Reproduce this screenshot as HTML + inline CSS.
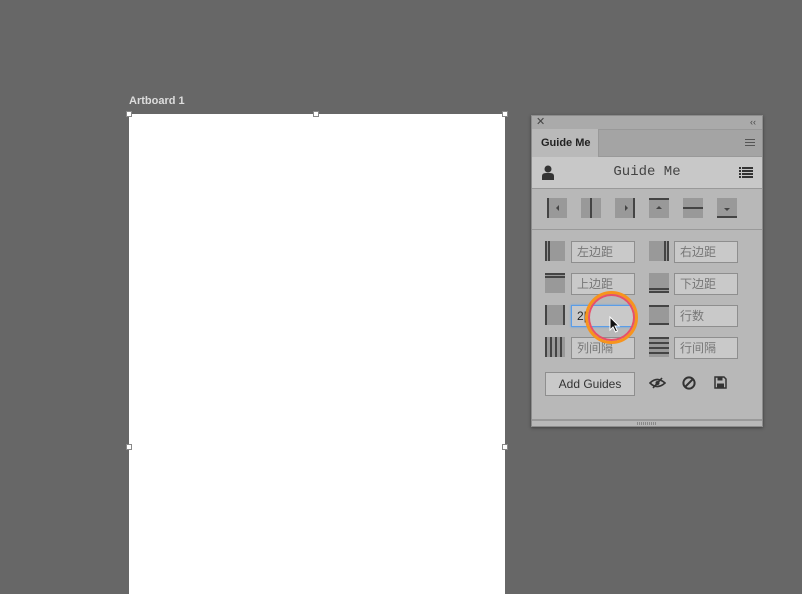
<!DOCTYPE html>
<html><head><meta charset="utf-8"><style>
*{margin:0;padding:0;box-sizing:border-box}
body{width:802px;height:594px;background:#676767;position:relative;overflow:hidden;font-family:"Liberation Sans","Noto Sans CJK SC",sans-serif}
.abs{position:absolute}
.h{position:absolute;width:6px;height:6px;border:1px solid #888;background:#fff}
.inp{position:absolute;width:64px;height:22px;border:1px solid #8e8e8e;background:#c9c9c9;font-size:12px;color:#777;padding:3px 5px;line-height:14px}
.ib{position:absolute;width:20px;height:20px;background:#999}
.ar{position:absolute;width:0;height:0;border:3px solid transparent}
</style></head><body>
<div class="abs" style="left:129px;top:95px;color:#ddd;font-size:11px;font-weight:bold">Artboard 1</div>
<div class="abs" style="left:129px;top:114px;width:376px;height:480px;background:#fff"></div>
<div class="h" style="left:126px;top:111px"></div><div class="h" style="left:313px;top:111px"></div><div class="h" style="left:502px;top:111px"></div>
<div class="h" style="left:126px;top:444px"></div><div class="h" style="left:502px;top:444px"></div>

<div class="abs" style="left:531px;top:115px;width:232px;height:312px;background:#b8b8b8;border:1px solid #8c8c8c;box-shadow:0 1px 3px rgba(0,0,0,.4)">
 <div class="abs" style="left:0;top:0;width:230px;height:13px;background:#aaa;font-size:11px;color:#444;line-height:12px"><span style="position:absolute;left:4px">✕</span><span style="position:absolute;right:6px;font-size:9px">‹‹</span></div>
 <div class="abs" style="left:0;top:13px;width:230px;height:28px;background:#a4a4a4;border-top:1px solid #999;border-bottom:1px solid #999"></div>
 <div class="abs" style="left:0;top:13px;width:67px;height:28px;background:#b9b9b9;border-right:1px solid #999;font-size:11px;font-weight:bold;color:#222;padding:8px 0 0 9px">Guide Me</div>
 <div class="abs" style="right:7px;top:23px;width:10px;height:7px;border-top:1px solid #555;border-bottom:1px solid #555"><div style="margin-top:2px;border-top:1px solid #555"></div></div>
 <div class="abs" style="left:0;top:41px;width:230px;height:32px;background:#c8c8c8;border-bottom:1px solid #999"></div>
 <div class="abs" style="left:0;top:48px;width:230px;text-align:center;font-family:'Liberation Mono',monospace;font-size:14px;color:#444">Guide Me</div>
 <svg class="abs" style="left:10px;top:49px" width="12" height="15"><circle cx="6" cy="4" r="3.5" fill="#333"/><path d="M0 15 V11 Q0 8 4 8 H8 Q12 8 12 11 V15Z" fill="#333"/></svg>
 <svg class="abs" style="left:207px;top:51px" width="14" height="11" fill="#333"><rect x="0" y="0" width="2" height="2"/><rect x="3" y="0" width="11" height="2"/><rect x="0" y="3" width="2" height="2"/><rect x="3" y="3" width="11" height="2"/><rect x="0" y="6" width="2" height="2"/><rect x="3" y="6" width="11" height="2"/><rect x="0" y="9" width="2" height="2"/><rect x="3" y="9" width="11" height="2"/></svg>
 <div class="ib" style="left:15px;top:82px;border-left:2px solid #444"><div class="ar" style="left:4px;top:7px;border-right-color:#444"></div></div>
 <div class="ib" style="left:49px;top:82px"><div style="position:absolute;left:9px;top:0;width:2px;height:20px;background:#444"></div></div>
 <div class="ib" style="left:83px;top:82px;border-right:2px solid #444"><div class="ar" style="left:10px;top:7px;border-left-color:#444"></div></div>
 <div class="ib" style="left:117px;top:82px;border-top:2px solid #444"><div class="ar" style="left:7px;top:3px;border-bottom-color:#444"></div></div>
 <div class="ib" style="left:151px;top:82px"><div style="position:absolute;top:9px;left:0;width:20px;height:2px;background:#444"></div></div>
 <div class="ib" style="left:185px;top:82px;border-bottom:2px solid #444"><div class="ar" style="left:7px;top:10px;border-top-color:#444"></div></div>
 <div class="abs" style="left:0;top:113px;width:230px;border-top:1px solid #999"></div>

 <div class="ib" style="left:13px;top:125px;border-left:5px double #444"></div><div class="inp" style="left:39px;top:125px">左边距</div>
 <div class="ib" style="left:117px;top:125px;border-right:5px double #444"></div><div class="inp" style="left:142px;top:125px">右边距</div>
 <div class="ib" style="left:13px;top:157px;border-top:5px double #444"></div><div class="inp" style="left:39px;top:157px">上边距</div>
 <div class="ib" style="left:117px;top:157px;border-bottom:5px double #444"></div><div class="inp" style="left:142px;top:157px">下边距</div>
 <div class="ib" style="left:13px;top:189px;border-left:2px solid #444;border-right:2px solid #444"></div><div class="inp" style="left:39px;top:189px;border:1px solid #5a9de8;box-shadow:0 0 2px #5a9de8;color:#222">2|</div>
 <div class="ib" style="left:117px;top:189px;border-top:2px solid #444;border-bottom:2px solid #444"></div><div class="inp" style="left:142px;top:189px">行数</div>
 <div class="ib" style="left:13px;top:221px;background:repeating-linear-gradient(90deg,#444 0 2px,#999 2px 5px)"></div><div class="inp" style="left:39px;top:221px">列间隔</div>
 <div class="ib" style="left:117px;top:221px;background:repeating-linear-gradient(180deg,#444 0 2px,#999 2px 5px)"></div><div class="inp" style="left:142px;top:221px">行间隔</div>

 <div class="abs" style="left:13px;top:256px;width:90px;height:24px;border:1px solid #8e8e8e;background:#c9c9c9;font-size:12px;color:#333;text-align:center;line-height:22px">Add Guides</div>
 <svg class="abs" style="left:117px;top:261px" width="17" height="12"><path d="M1 6 Q8 -1 16 6 Q8 13 1 6Z" fill="none" stroke="#333" stroke-width="1.6"/><circle cx="8.5" cy="6" r="2" fill="#333"/><path d="M4 11 L13 1" stroke="#333" stroke-width="1.6"/></svg>
 <svg class="abs" style="left:150px;top:260px" width="14" height="14"><circle cx="7" cy="7" r="5.6" fill="none" stroke="#333" stroke-width="2"/><path d="M3 11 L11 3" stroke="#333" stroke-width="2"/></svg>
 <svg class="abs" style="left:182px;top:260px" width="13" height="13"><path d="M1 1 H10 L12 3 V12 H1Z" fill="none" stroke="#333" stroke-width="1.5"/><rect x="3.5" y="1" width="5" height="3.5" fill="#333"/><rect x="3" y="7.5" width="7" height="4" fill="#333"/></svg>

 <div class="abs" style="left:0;top:303px;width:230px;border-top:2px solid #999"></div>
 <div class="abs" style="left:105px;top:306px;width:20px;height:3px;background:repeating-linear-gradient(90deg,#888 0 1px,transparent 1px 2px)"></div>
</div>
<div class="abs" style="left:585px;top:291px;width:53px;height:53px;border-radius:50%;border:3px solid #f7941d;box-shadow:inset 0 0 0 2px #e8506a"></div>
<svg class="abs" style="left:609px;top:316px" width="12" height="18"><path d="M1 1 V14 L4 11 L6.5 16 L8.5 15 L6 10 H10Z" fill="#111" stroke="#fff" stroke-width="1"/></svg>
</body></html>
